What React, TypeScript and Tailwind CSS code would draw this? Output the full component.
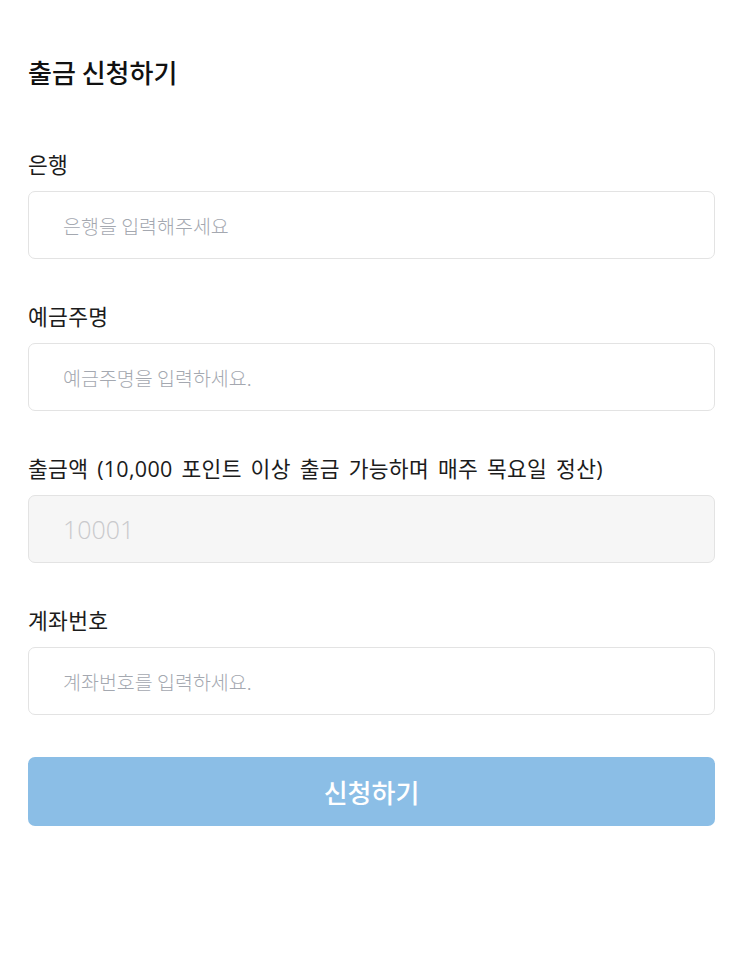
import { useState } from 'react';

const font = { fontFamily: '"Noto Sans CJK KR", "Noto Sans", sans-serif' };
const mixed = { fontFamily: '"Open Sans", "Noto Sans CJK KR", sans-serif' };

interface FieldProps {
  label: string;
  placeholder?: string;
  value?: string;
  disabled?: boolean;
}

const Field = ({ label, placeholder, value, disabled }: FieldProps) => {
  const [text, setText] = useState(value || '');
  return (
    <div className="flex flex-col">
      <label
        className="text-[21.5px] leading-[28px] tracking-[0.3px] [word-spacing:3px] text-[#1c1c1c] mb-[12px]"
        style={mixed}
      >
        {label}
      </label>
      {disabled ? (
        <input
          value={text}
          disabled
          readOnly
          className="h-[68px] w-full rounded-[7px] border border-[#e3e3e3] bg-[#f6f6f6] pl-[34px] text-[25px] font-light text-[#c9c9cc] outline-none"
          style={mixed}
        />
      ) : (
        <input
          value={text}
          onChange={(e) => setText(e.target.value)}
          placeholder={placeholder}
          className="h-[68px] w-full rounded-[7px] border border-[#e3e3e3] bg-white pl-[34px] text-[19.5px] font-light text-[#222] placeholder:text-[#a4a8b0] outline-none"
          style={font}
        />
      )}
    </div>
  );
};

export default function App() {
  return (
    <div className="min-h-[978px] bg-white px-[28px] pt-[55px]" style={font}>
      <h1 className="text-[26px] leading-[34px] font-medium text-[#111]">출금 신청하기</h1>
      <form className="mt-[62px] flex flex-col gap-[44px]" onSubmit={(e) => e.preventDefault()}>
        <Field label="은행" placeholder="은행을 입력해주세요" />
        <Field label="예금주명" placeholder="예금주명을 입력하세요." />
        <Field label="출금액 (10,000 포인트 이상 출금 가능하며 매주 목요일 정산)" value="10001" disabled />
        <Field label="계좌번호" placeholder="계좌번호를 입력하세요." />
      </form>
      <button
        type="button"
        className="mt-[42px] h-[69px] w-full rounded-[7px] bg-[#8bbee6] text-[26px] font-medium text-white"
      >
        신청하기
      </button>
    </div>
  );
}
